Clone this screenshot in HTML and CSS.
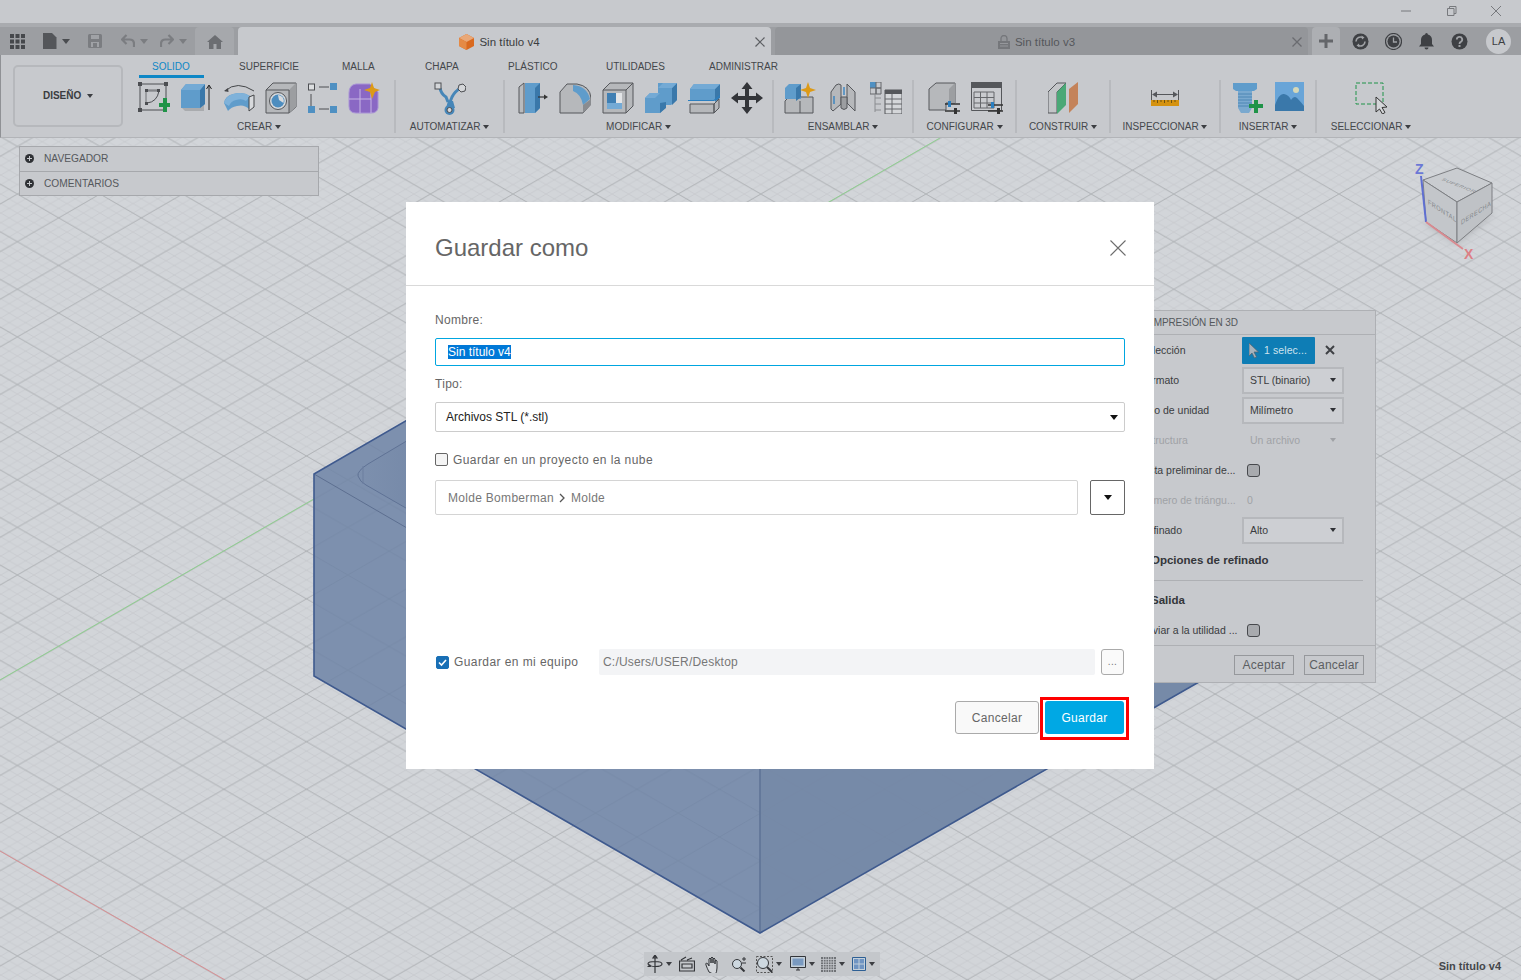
FILE: index.html
```html
<!DOCTYPE html>
<html lang="es">
<head>
<meta charset="utf-8">
<title>Sin título v4</title>
<link rel="stylesheet" href="styles.css">
</head>
<body>
<div class="app">
  <div class="titlebar">
    <svg class="win" width="14" height="14" viewBox="0 0 14 14"><path d="M2 7H12" stroke="#77797d" stroke-width="1"/></svg>
    <svg class="win" width="14" height="14" viewBox="0 0 14 14"><path d="M3.5 4.5h6.5v7H3.500zM5.500 4.500V2.500h6.500v7H10" fill="none" stroke="#77797d"/></svg>
    <svg class="win" width="14" height="14" viewBox="0 0 14 14"><path d="M2 2L12 12M12 2L2 12" stroke="#77797d"/></svg>
  </div>

  <div class="tabbar">
    <div class="qat">
      <svg class="q-grid" width="15" height="15" viewBox="0 0 15 15"><path d="M0 0h4v4H0zM5.500 0h4v4h-4zM11 0h4v4h-4zM0 5.500h4v4H0zM5.500 5.500h4v4h-4zM11 5.500h4v4h-4zM0 11h4v4H0zM5.500 11h4v4h-4zM11 11h4v4h-4z" fill="#46484c"/></svg>
      <svg class="q-file" width="14" height="16" viewBox="0 0 14 16"><path d="M0 0h9l4.500 4.500V16H0z" fill="#54565a"/></svg>
      <span class="caret q-caret1"></span>
      <svg class="q-save" width="14" height="14" viewBox="0 0 14 14"><path d="M0 1.500Q0 0 1.500 0h11Q14 0 14 1.500v11Q14 14 12.500 14h-11Q0 14 0 12.500z" fill="#7b7d81"/><path d="M3 1h8v4H3zM3 8h8v5H3z" fill="#a0a2a6"/><path d="M5 9h4v4H5z" fill="#7b7d81"/></svg>
      <svg class="q-undo" width="14" height="14" viewBox="0 0 14 14"><path d="M5.500 1L1 5.500l4.500 4.500M1.500 5.500H8.500Q13 5.500 13 10v3" fill="none" stroke="#7b7d81" stroke-width="2.200"/></svg>
      <span class="caret caret-dim q-caret2"></span>
      <svg class="q-redo" width="14" height="14" viewBox="0 0 14 14"><path d="M8.500 1L13 5.500l-4.500 4.500M12.500 5.500H5.500Q1 5.500 1 10v3" fill="none" stroke="#7b7d81" stroke-width="2.200"/></svg>
      <span class="caret caret-dim q-caret3"></span>
    </div>
    <div class="tab-home">
      <svg width="16" height="14" viewBox="0 0 16 14"><path d="M8 0L16 7h-2v7H9.500V9h-3v5H2V7H0z" fill="#6c6e72"/></svg>
    </div>
    <div class="tab tab-active">
      <svg class="tab-ico" width="15" height="16" viewBox="0 0 15 16"><path d="M7.500 0L15 4v8l-7.500 4L0 12V4z" fill="#d9691f"/><path d="M7.500 0L15 4 7.500 8 0 4z" fill="#e9a878"/><path d="M0 4l7.500 4v8L0 12z" fill="#e58a45"/></svg>
      <span class="tab-name">Sin título v4</span>
      <svg class="tab-x" width="10" height="10" viewBox="0 0 10 10"><path d="M.5.500l9 9M9.500.500l-9 9" stroke="#5d5f63" stroke-width="1.200"/></svg>
    </div>
    <div class="tab tab-other">
      <svg class="tab-ico" width="12" height="14" viewBox="0 0 12 14"><path d="M3 6V3.500a3 3 0 0 1 6 0V6" fill="none" stroke="#75777b" stroke-width="1.300"/><path d="M0 6h12v8H0z" fill="#75777b"/><path d="M2 8.500h8M2 11h8" stroke="#96989c"/></svg>
      <span class="tab-name">Sin título v3</span>
      <svg class="tab-x" width="10" height="10" viewBox="0 0 10 10"><path d="M.5.500l9 9M9.500.500l-9 9" stroke="#6a6c70" stroke-width="1.300"/></svg>
    </div>
    <div class="tab-plus">
      <svg width="14" height="14" viewBox="0 0 14 14"><path d="M5.500 0h3v5.500H14v3H8.500V14h-3V8.500H0v-3h5.500z" fill="#64666a"/></svg>
    </div>
    <div class="tray">
      <svg width="17" height="17" viewBox="0 0 17 17"><circle cx="8.500" cy="8.500" r="8" fill="#3e4044"/><path d="M4 8.500a4.500 4.500 0 0 1 7-3.700M13 8.500a4.500 4.500 0 0 1-7 3.700" fill="none" stroke="#a0a2a6" stroke-width="1.600"/><path d="M9.500 2.500l3 2-2.500 2zM7.500 14.500l-3-2 2.500-2z" fill="#a0a2a6"/></svg>
      <svg width="17" height="17" viewBox="0 0 17 17"><circle cx="8.500" cy="8.500" r="8" fill="none" stroke="#3e4044" stroke-width="1.200"/><circle cx="8.500" cy="8.500" r="6" fill="#3e4044"/><path d="M8.500 4.500v4.500h3.500" fill="none" stroke="#a0a2a6" stroke-width="1.300"/></svg>
      <svg width="15" height="17" viewBox="0 0 15 17"><path d="M7.500 0a1.500 1.500 0 0 1 1.400 1.500Q13 2.500 13 7v4l2 2.500H0L2 11V7q0-4.500 4.100-5.500A1.500 1.500 0 0 1 7.500 0z" fill="#3e4044"/><path d="M5.500 14.500h4a2 2 0 0 1-4 0z" fill="#3e4044"/></svg>
      <svg width="17" height="17" viewBox="0 0 17 17"><circle cx="8.500" cy="8.500" r="8" fill="#3e4044"/><path d="M5.800 6.500a2.700 2.700 0 1 1 4 2.400q-1.300.6-1.300 2" fill="none" stroke="#a0a2a6" stroke-width="1.800"/><rect x="7.500" y="12" width="2" height="2" fill="#a0a2a6"/></svg>
      <span class="avatar">LA</span>
    </div>
  </div>

  <div class="ribbon">
    <div class="design-wrap">
      <button class="design-btn">DISEÑO <span class="caret caret-small"></span></button>
    </div>
    <div class="ribbon-main">
      <div class="rtabs">
        <span class="rtab rtab-on">SOLIDO</span>
        <span class="rtab">SUPERFICIE</span>
        <span class="rtab">MALLA</span>
        <span class="rtab">CHAPA</span>
        <span class="rtab">PLÁSTICO</span>
        <span class="rtab">UTILIDADES</span>
        <span class="rtab">ADMINISTRAR</span>
      </div>
      <div class="rgroups">
        <div class="rgroup g-crear">
          <div class="ricons">
            <svg width="32" height="32" viewBox="0 0 32 32"><path d="M2 2h26v26H2z" fill="none" stroke="#4c4e52"/><path d="M0 0h4v4H0zM26 0h4v4h-4zM0 26h4v4H0z" fill="#4c4e52"/><path d="M8 8h12v1H8zM8 8v13" stroke="#6e7074" fill="none"/><path d="M9 21Q19 20 21 9" fill="none" stroke="#4c4e52"/><path d="M7 7h3v3H7zM19 7h3v3h-3zM7 20h3v3H7z" fill="#4c4e52"/><path d="M21 21h4v-5h4v5h4.500v4H29v5h-4v-5h-4z" fill="#1f9348"/></svg>
            <svg width="32" height="32" viewBox="0 0 32 32"><path d="M1 25l4 4h19l0-6H1z" fill="#a9abae"/><path d="M1 8L6 2h19v20l-5 4H1z" fill="#5f9ccb"/><path d="M20 8l5-6v20l-5 4z" fill="#3a78aa"/><path d="M1 8L6 2h19l-5 6z" fill="#74aad5"/><path d="M29 28V4M26.500 7L29 3l2.500 4" fill="none" stroke="#222"/></svg>
            <svg width="32" height="32" viewBox="0 0 32 32"><path d="M2 9Q14-2 31 9" fill="none" stroke="#444649"/><path d="M1 9l4-3 .5 4z" fill="#444649"/><path d="M1 21Q2 14 10 12q10-3 17 2l-1 13q-5-5-12-3-6 1-9 5z" fill="#5f9ccb"/><path d="M1 21Q3 14 10 12q10-3 17 2l-4 5q-4-3-10-1-5 1-7 6z" fill="#7fb2da"/><path d="M26 15l5-2v12l-5 4z" fill="#d8dadd" stroke="#444649"/></svg>
            <svg width="32" height="32" viewBox="0 0 32 32"><path d="M1 8l7-7h23v24l-7 6H1z" fill="#b6b8bb" stroke="#55575b"/><path d="M24 8l7-7v24l-7 6z" fill="#9c9ea1"/><path d="M1 8h23v23" fill="none" stroke="#55575b"/><circle cx="13" cy="19" r="8.500" fill="#d7dadd" stroke="#55575b"/><circle cx="13" cy="19" r="6.500" fill="#4d8dbf"/><path d="M13 13a6 6 0 0 1 5.500 8L14 18z" fill="#d7dadd"/></svg>
            <svg width="30" height="32" viewBox="0 0 30 32"><path d="M3 12V26M11 5H21M11 27H21" stroke="#4c4e52"/><rect x=".5" y="2" width="6" height="6" fill="#dcdee0" stroke="#4c4e52"/><rect x="0" y="24" width="7" height="7" fill="#4f90c2"/><rect x="22" y="1" width="7" height="7" fill="#4f90c2"/><rect x="22" y="24" width="7" height="7" fill="#4f90c2"/></svg>
            <svg width="32" height="32" viewBox="0 0 32 32"><path d="M1 11Q1 3 8 2h14l8 8v16q-1 5-7 5H8Q1 31 1 24z" fill="#8a68c4" stroke="#a892d6"/><path d="M1 17h22M12 7v24M23 10v21" stroke="#c7b6e4"/><path d="M24 0l2 6 6 2-5 2-3 7-2-7-6-2 6-2z" fill="#dd9a16"/></svg>
          </div>
          <span class="rlabel">CREAR <span class="caret caret-small"></span></span>
        </div>
        <div class="rgroup g-auto">
          <div class="ricons">
            <svg width="32" height="34" viewBox="0 0 32 34"><path d="M6 6q1 6 6 9l2 5M27 6q-6 3-9 9l-2 5" fill="none" stroke="#4686b8" stroke-width="3"/><path d="M14 19h5l2 7h-9z" fill="#4686b8"/><rect x="1" y="1" width="6" height="6" fill="#d4d6d9" stroke="#4c4e52"/><path d="M25 3l4-1 3 3-1 4-4 1-3-3z" fill="#d4d6d9" stroke="#4c4e52"/><circle cx="15.500" cy="28" r="5" fill="#4686b8"/><circle cx="15.500" cy="28" r="2.500" fill="#d4d6d9" stroke="#4c4e52"/></svg>
          </div>
          <span class="rlabel">AUTOMATIZAR <span class="caret caret-small"></span></span>
        </div>
        <div class="rgroup g-mod">
          <div class="ricons">
            <svg width="30" height="32" viewBox="0 0 30 32"><path d="M1 5l5-4v30H1z" fill="#b9bbbe" stroke="#55575b"/><path d="M7 1h15v25l-5 5H7z" fill="#5f9ccb"/><path d="M17 6l5-5v25l-5 5z" fill="#3a78aa"/><path d="M20 15h8" stroke="#333" stroke-width="1.200"/><path d="M26 12.500l4 2.500-4 2.500z" fill="#333"/></svg>
            <svg width="32" height="32" viewBox="0 0 32 32"><path d="M1 10l7-8h10q13 2 14 14v6l-8 9H1z" fill="#b6b8bb" stroke="#55575b"/><path d="M14 3q14 1 17 14l-7 6Q22 12 14 9z" fill="#5f9ccb"/><path d="M24 23l8-6v6l-8 8z" fill="#8a8c90"/></svg>
            <svg width="32" height="32" viewBox="0 0 32 32"><path d="M1 8l7-7h23v23l-7 7H1z" fill="#b6b8bb" stroke="#55575b"/><path d="M1 8h23v23M24 8l7-7" fill="none" stroke="#55575b"/><path d="M5 11h15v16H5z" fill="#e3e5e7"/><path d="M5 11h9v10H5z" fill="#3f7fb3"/><path d="M14 21h6v6H5v-6z" fill="#74aad5"/></svg>
            <svg width="32" height="32" viewBox="0 0 32 32"><path d="M0 16l5-5h8V1h19v17l-6 5h-6v3l-5 5H0z" fill="#5f9ccb"/><path d="M27 6l5-5v17l-5 5zM15 21l6-1v6l-6 5z" fill="#3a78aa"/><path d="M0 16l5-5h10l-5 5zM13 6l5-5h14l-5 5z" fill="#74aad5"/></svg>
            <svg width="32" height="32" viewBox="0 0 32 32"><path d="M2 7l4-5h26v16H2z" fill="#5f9ccb"/><path d="M27 7l5-5v14l-5 4z" fill="#3a78aa"/><path d="M2 7l4-5h26l-5 5z" fill="#74aad5"/><path d="M2 21h25l5-5v2l-5 5H2z" fill="#c6c8cc"/><path d="M0 18.500h26l6-5" fill="none" stroke="#2b7fc0" stroke-width="1.200"/><path d="M2 22h24v9H2zM26 22l5-5v9l-5 5z" fill="#b6b8bb" stroke="#55575b"/></svg>
            <svg width="32" height="32" viewBox="0 0 32 32"><path d="M16 0l5.500 7h-3.500v7h7v-3.500L32 16l-7 5.500V18h-7v7h3.500L16 32l-5.500-7h3.500v-7H7v3.500L0 16l7-5.500V14h7V7h-3.500z" fill="#333539"/></svg>
          </div>
          <span class="rlabel">MODIFICAR <span class="caret caret-small"></span></span>
        </div>
        <div class="rgroup g-ens">
          <div class="ricons">
            <svg width="32" height="32" viewBox="0 0 32 32"><path d="M1 19l4-4h24v16H1z" fill="#b6b8bb" stroke="#55575b"/><path d="M16 19v12" stroke="#55575b"/><path d="M1 6l4-4h12v15H1z" fill="#5f9ccb"/><path d="M12 6l5-4v13l-5 4z" fill="#3a78aa"/><path d="M24 0l2 6 6 2-6 2-2 6-2-6-6-2 6-2z" fill="#dd9a16"/></svg>
            <svg width="28" height="32" viewBox="0 0 28 32"><path d="M2 10l5-7q3-2 5 0v19l-8 7-2-2z" fill="#b6b8bb" stroke="#55575b"/><path d="M18 2l8 8v19l-8-8z" fill="#b6b8bb" stroke="#55575b"/><path d="M12 15h6v11q-3 3-6 0z" fill="#9c9ea1" stroke="#55575b"/><path d="M15 5v8M5 14v8" stroke="#2b7fc0" stroke-width="1.300"/></svg>
            <svg width="32" height="32" viewBox="0 0 32 32"><path d="M0 0h6v6H0z" fill="#4f90c2"/><path d="M6 0h5v6H6zM0 6h6v6H0zM6 6h5v6H6z" fill="none" stroke="#65676b"/><path d="M5 12v18M5 16h6M5 22h6M5 28h6" stroke="#8a8c90"/><path d="M15 8h17v24H15z" fill="#d4d6d9" stroke="#55575b"/><path d="M15 8h17v4H15z" fill="#55575b"/><path d="M15 17h17M15 22h17M15 27h17M22 12v20" stroke="#65676b"/></svg>
          </div>
          <span class="rlabel">ENSAMBLAR <span class="caret caret-small"></span></span>
        </div>
        <div class="rgroup g-conf">
          <div class="ricons">
            <svg width="32" height="32" viewBox="0 0 32 32"><path d="M1 7l7-6h19v20h-9v7H1z" fill="#b6b8bb" stroke="#55575b"/><path d="M21 7l6-6v20h-6z" fill="#9c9ea1"/><path d="M17 22h15M17 29h15" stroke="#333" stroke-width="1.500"/><path d="M20 19h3v6h-3z" fill="#2b7fc0"/><path d="M26 26h3v6h-3z" fill="#333"/></svg>
            <svg width="32" height="32" viewBox="0 0 32 32"><path d="M.5.500h30v28H.5z" fill="#c9cbcf" stroke="#55575b"/><path d="M0 0h31v6H0z" fill="#55575b"/><path d="M3 10h20v16H3z" fill="none" stroke="#65676b"/><path d="M3 15.500h20M3 21h20M9.500 10v16M16 10v16" stroke="#65676b"/><path d="M17 23h15M17 29h15" stroke="#333" stroke-width="1.500"/><path d="M20 20h3v6h-3z" fill="#2b7fc0"/><path d="M26 26h3v6h-3z" fill="#333"/></svg>
          </div>
          <span class="rlabel">CONFIGURAR <span class="caret caret-small"></span></span>
        </div>
        <div class="rgroup g-cons">
          <div class="ricons">
            <svg width="30" height="32" viewBox="0 0 30 32"><path d="M0 10l9-9h9v0l-9 9v21H0z" fill="#c3c5c8" stroke="#55575b"/><path d="M9 10l9-9v22l-9 9z" fill="#4aa876"/><path d="M21 7l9-7v22l-9 9z" fill="#c4835a"/></svg>
          </div>
          <span class="rlabel">CONSTRUIR <span class="caret caret-small"></span></span>
        </div>
        <div class="rgroup g-insp">
          <div class="ricons">
            <svg width="28" height="32" viewBox="0 0 28 32"><path d="M.5 8v10M27.500 8v10M2 12.500h24" stroke="#55575b"/><path d="M1 12.500l5-3v6zM27 12.500l-5-3v6z" fill="#55575b"/><path d="M0 18h28v6H0z" fill="#d5920f"/><path d="M3 18v2M6.500 18v3M10 18v2M13.500 18v3M17 18v2M20.500 18v3M24 18v2" stroke="#6d5010"/></svg>
          </div>
          <span class="rlabel">INSPECCIONAR <span class="caret caret-small"></span></span>
        </div>
        <div class="rgroup g-ins">
          <div class="ricons">
            <svg width="30" height="32" viewBox="0 0 30 32"><path d="M0 1h24v6l-3 2H3L0 7z" fill="#5f9ccb"/><path d="M5 9h14v17l-3 5H8l-3-5z" fill="#7aa9cf"/><path d="M5 12h14M5 15h14M5 18h14M5 21h14M5 24h14" stroke="#4d86b4"/><path d="M16 22h5v-4h4v4h5v4h-5v5h-4v-5h-5z" fill="#1f9348"/></svg>
            <svg width="29" height="30" viewBox="0 0 29 30"><path d="M0 0h29v29H0z" fill="#69a5d8"/><circle cx="21" cy="8" r="3" fill="#d6d8b8"/><path d="M0 23q4-12 9-11t7 6q3-5 6-2t7 8v5H0z" fill="#3a78aa"/></svg>
          </div>
          <span class="rlabel">INSERTAR <span class="caret caret-small"></span></span>
        </div>
        <div class="rgroup g-sel">
          <div class="ricons">
            <svg width="33" height="32" viewBox="0 0 33 32"><path d="M1 1h27v21H1z" fill="none" stroke="#1f9348" stroke-dasharray="4 2"/><path d="M21 15v15l3.500-3 3 5 2.500-1.500-3-5 5-.5z" fill="#d4d6d9" stroke="#333"/></svg>
          </div>
          <span class="rlabel">SELECCIONAR <span class="caret caret-small"></span></span>
        </div>
      </div>
    </div>
  </div>

  <div class="stage">
    <svg class="canvas" viewBox="0 138 1521 842" preserveAspectRatio="none">
      <defs>
        <pattern id="minor" width="16.520" height="9.524" patternUnits="userSpaceOnUse" patternTransform="translate(17.400 3.570)">
          <path d="M0 0L16.520 9.524M0 9.524L16.520 0" stroke="#c6c9cd" stroke-width=".8"/>
        </pattern>
        <pattern id="major" width="82.600" height="47.620" patternUnits="userSpaceOnUse" patternTransform="translate(17.400 3.570)">
          <path d="M0 0L82.600 47.620M0 47.620L82.600 0" stroke="#aeb1b5" stroke-width=".9"/>
        </pattern>
        <pattern id="ghost" width="82.600" height="47.620" patternUnits="userSpaceOnUse" patternTransform="translate(17.400 3.570)">
          <path d="M0 0L82.600 47.620M0 47.620L82.600 0" stroke="#7588a6" stroke-width=".8"/>
        </pattern>
        <linearGradient id="pocket" x1="0" y1="0" x2="1" y2="0">
          <stop offset="0" stop-color="#7d90ae"/>
          <stop offset=".5" stop-color="#6e82a2"/>
        </linearGradient>
        <filter id="soft"><feGaussianBlur stdDeviation="5"/></filter>
      </defs>
      <rect x="0" y="138" width="1521" height="842" fill="#d2d5d9"/>
      <rect x="0" y="138" width="1521" height="842" fill="url(#minor)"/>
      <rect x="0" y="138" width="1521" height="842" fill="url(#major)"/>
      <path d="M0 680L940 138" stroke="#8fd08f" stroke-width="1"/>
      <path d="M0 851L225 980" stroke="#d98f93" stroke-width="1"/>
      <path d="M314 474L760 216L1206 474L1206 678L760 933L314 676z" fill="#7d90ae"/>
      <path d="M760 733L1206 474V678L760 933z" fill="#768aa8"/>
      <path d="M314 474L760 216L1206 474L1206 678L760 933L314 676z" fill="url(#ghost)"/>
      <path d="M420 433L368 464Q357 471 358 476Q360 482 366 485L470 545L600 460z" fill="url(#pocket)" stroke="#5f7295" stroke-width="1"/>
      <path d="M363 466V484" stroke="#6c7f9f"/>
      <path d="M314 474L760 733" fill="none" stroke="#5d6f90" stroke-width="1"/>
      <path d="M760 733L1206 474" fill="none" stroke="#5d6f90" stroke-width="1"/>
      <path d="M760 733V933" fill="none" stroke="#5f7497" stroke-width="1.600"/>
      <path d="M760 216L314 474V676L760 933L1206 678" fill="none" stroke="#3f5a8e" stroke-width="1.600"/>
      <g filter="url(#soft)"><path d="M1426 222L1457 243L1492 213L1480 205L1440 215z" fill="#a7aaae"/></g>
      <path d="M1423 180L1457 168L1492 183L1457 202z" fill="#c9ccd0" stroke="#7d7f83"/>
      <path d="M1423 180L1457 202V243L1426 222z" fill="#c3c6ca" stroke="#7d7f83"/>
      <path d="M1457 202L1492 183V213L1457 243z" fill="#bfc2c6" stroke="#7d7f83"/>
      <text class="cube-t" transform="matrix(.82 .32 -.55 .4 1441 180)">SUPERIOR</text>
      <text class="cube-t" transform="matrix(.8 .52 0 1 1428 204)">FRONTAL</text>
      <text class="cube-t" transform="matrix(.8 -.52 0 1 1461 225)">DERECHA</text>
      <path d="M1426 222L1421 176" stroke="#5f6fd2" stroke-width="2"/>
      <path d="M1426 222L1463 249" stroke="#d98a90" stroke-width="2"/>
      <text class="axis axis-z" x="1415" y="174">Z</text>
      <text class="axis axis-x" x="1464" y="259">X</text>
    </svg>

    <div class="browser">
      <div class="br-row"><span class="br-plus"></span>NAVEGADOR</div>
      <div class="br-row"><span class="br-plus"></span>COMENTARIOS</div>
    </div>

    <div class="palette">
      <div class="pal-head">IMPRESIÓN EN 3D</div>
      <div class="pal-body">
        <div class="pal-row"><span class="pal-label">Selección</span>
          <span class="pal-sel"><svg width="10" height="15" viewBox="0 0 10 15"><path d="M0 0v13l3-3 2.500 5 2-1-2.500-5h4.500z" fill="#a6b3bd" stroke="#54606a" stroke-width=".7"/></svg>1 selec...</span>
          <svg class="pal-x" width="10" height="10" viewBox="0 0 10 10"><path d="M1 1l8 8M9 1l-8 8" stroke="#3f4145" stroke-width="2"/></svg>
        </div>
        <div class="pal-row"><span class="pal-label">Formato</span><span class="pal-drop">STL (binario)<span class="caret caret-pal"></span></span></div>
        <div class="pal-row"><span class="pal-label">Tipo de unidad</span><span class="pal-drop">Milímetro<span class="caret caret-pal"></span></span></div>
        <div class="pal-row pal-off"><span class="pal-label">Estructura</span><span class="pal-drop pal-drop-off">Un archivo<span class="caret caret-pal caret-off"></span></span></div>
        <div class="pal-row"><span class="pal-label">Vista preliminar de...</span><span class="pal-check"></span></div>
        <div class="pal-row pal-off"><span class="pal-label">Número de triángu...</span><span class="pal-val">0</span></div>
        <div class="pal-row"><span class="pal-label">Refinado</span><span class="pal-drop">Alto<span class="caret caret-pal"></span></span></div>
        <div class="pal-row pal-sect">Opciones de refinado</div>
        <div class="pal-rule"></div>
        <div class="pal-row pal-sect">Salida</div>
        <div class="pal-row"><span class="pal-label">Enviar a la utilidad ...</span><span class="pal-check"></span></div>
      </div>
      <div class="pal-foot"><span class="pal-btn pal-ok">Aceptar</span><span class="pal-btn pal-no">Cancelar</span></div>
    </div>

    <div class="viewbar">
      <div class="vb"><svg width="16" height="18" viewBox="0 0 16 18"><path d="M8 0v18M8 0l-2 3h4zM1 9q0-2.500 7-2.500T15 9q0 2.500-7 2.500Q3 11.500 1 9z" fill="none" stroke="#333539" stroke-width="1.200"/><path d="M3 9l-3 3h4z" fill="#333539"/></svg><span class="caret caret-small"></span></div>
      <div class="vb"><svg width="16" height="16" viewBox="0 0 16 16"><path d="M.5 5h15v10H.5zM3 8h10v4H3zM2 4l5-3M8 4l5-2" fill="none" stroke="#333539" stroke-width="1.200"/></svg></div>
      <div class="vb"><svg width="16" height="17" viewBox="0 0 16 17"><path d="M4 16Q2 12 1 9t2-1l1 2V3q1-2 2 0v4-5q1-2 2 0v5-4q1-2 2 0v5-3q1-1.500 2 0v7q0 4-2 7z" fill="#d2d5d9" stroke="#333539"/></svg></div>
      <div class="vb"><svg width="16" height="16" viewBox="0 0 16 16"><circle cx="6" cy="8" r="4.500" fill="#cdd8e0" stroke="#333539"/><path d="M9.500 11.500l4 4" stroke="#333539" stroke-width="2"/><path d="M11 3h4M13 1v4M11 7h4" stroke="#333539"/></svg></div>
      <div class="vb"><svg width="17" height="17" viewBox="0 0 17 17"><path d="M.5.500h16v16H.5z" fill="none" stroke="#555" stroke-dasharray="2 1.500"/><circle cx="7" cy="7" r="5.500" fill="#cdd8e0" stroke="#333539"/><path d="M11 11l5 5" stroke="#333539" stroke-width="2"/></svg><span class="caret caret-small"></span></div>
      <div class="vb"><svg width="16" height="16" viewBox="0 0 16 16"><path d="M.5.500h15v11H.5z" fill="#c4d0da" stroke="#333539"/><path d="M2.500 2.500h11v7h-11z" fill="#7a9ac0"/><path d="M6 14h4M8 12v2" stroke="#333539"/></svg><span class="caret caret-small"></span></div>
      <div class="vb"><svg width="15" height="15" viewBox="0 0 15 15"><path d="M0 0h15v15H0z" fill="#6f7276"/><path d="M2.500 0v15M5 0v15M7.500 0v15M10 0v15M12.500 0v15M0 2.500h15M0 5h15M0 7.500h15M0 10h15M0 12.500h15" stroke="#c4c7cb" stroke-width=".8"/></svg><span class="caret caret-small"></span></div>
      <div class="vb"><svg width="14" height="14" viewBox="0 0 14 14"><path d="M.5.500h13v13H.5z" fill="#c4d0da" stroke="#2d5f94"/><path d="M2 2h4.500v4.500H2zM7.500 2H12v4.500H7.500zM2 7.500h4.500V12H2zM7.500 7.500H12V12H7.500z" fill="#6f94c2"/></svg><span class="caret caret-small"></span></div>
    </div>
    <div class="docname">Sin título v4</div>
  </div>

  <div class="dialog">
    <div class="dlg-head">
      <h1 class="dlg-title">Guardar como</h1>
      <svg width="16" height="16" viewBox="0 0 16 16"><path d="M.5.500l15 15M15.500.500l-15 15" stroke="#6d6d6d" stroke-width="1.100"/></svg>
    </div>
    <div class="dlg-body">
      <label class="fld-label l-name">Nombre:</label>
      <div class="input"><span class="selected">Sin título v4</span></div>
      <label class="fld-label l-type">Tipo:</label>
      <div class="select">Archivos STL (*.stl)<span class="caret caret-black"></span></div>
      <div class="check-row r-cloud"><span class="box"></span><span class="check-text">Guardar en un proyecto en la nube</span></div>
      <div class="crumb-row">
        <div class="crumb">Molde Bomberman<svg width="7" height="10" viewBox="0 0 7 10"><path d="M1 1l4 4-4 4" fill="none" stroke="#555" stroke-width="1.300"/></svg>Molde</div>
        <div class="crumb-btn"><span class="caret caret-black"></span></div>
      </div>
      <div class="local-row">
        <div class="local-check"><span class="box box-on"><svg width="11" height="11" viewBox="0 0 11 11"><path d="M2 5.500l2.500 2.500L9 3" fill="none" stroke="#fff" stroke-width="1.600"/></svg></span><span class="check-text">Guardar en mi equipo</span></div>
        <div class="path">C:/Users/USER/Desktop</div>
        <div class="path-btn">...</div>
      </div>
      <div class="actions">
        <button class="btn btn-cancel">Cancelar</button>
        <button class="btn btn-save">Guardar</button>
      </div>
    </div>
  </div>
</div>
</body>
</html>
```

FILE: styles.css
```css
* { box-sizing: border-box; }
html, body { margin: 0; padding: 0; }
body { font-family: "Liberation Sans", Arial, sans-serif; background: #c6c8cc; }
.app { position: relative; width: 1521px; height: 980px; overflow: hidden; display: flex; flex-direction: column; }

.caret { display: inline-block; width: 0; height: 0; border-left: 4px solid transparent; border-right: 4px solid transparent; border-top: 5px solid #4a4c50; }
.caret-dim { border-top-color: #7b7d81; }
.caret-small { border-left-width: 3px; border-right-width: 3px; border-top-width: 4px; border-top-color: #3c3e42; vertical-align: middle; margin-left: 0; }

.titlebar { height: 23px; flex: none; background: #c7c9cd; display: flex; justify-content: flex-end; align-items: center; gap: 31px; padding: 0 18px 2px 0; }

.tabbar { height: 32px; flex: none; background: #9c9ea2; border-top: 4px solid #a9abaf; display: flex; align-items: stretch; position: relative; }
.qat { width: 195px; display: flex; align-items: center; flex: none; }
.q-grid { margin-left: 10px; }
.q-file { margin-left: 18px; }
.q-caret1 { margin-left: 5px; }
.q-save { margin-left: 18px; }
.q-undo { margin-left: 19px; }
.q-caret2 { margin-left: 5px; }
.q-redo { margin-left: 12px; }
.q-caret3 { margin-left: 5px; }
.tab-home { width: 39px; flex: none; background: #a6a8ac; border-radius: 4px 4px 0 0; display: flex; align-items: center; justify-content: center; margin-right: 4px; padding-top: 2px; }
.tab { width: 533px; flex: none; border-radius: 4px 4px 0 0; display: flex; align-items: center; justify-content: center; position: relative; font-size: 11.5px; padding: 2px 10px 0 0; }
.tab-active { background: #c7c9cd; color: #3a3c40; margin-right: 4px; }
.tab-other { background: #94969a; color: #55575b; margin-right: 4px; }
.tab-ico { margin-right: 5px; }
.tab-x { position: absolute; right: 6px; top: 10px; }
.tab-plus { width: 28px; flex: none; background: #adafb3; border-radius: 4px 4px 0 0; display: flex; align-items: center; justify-content: center; }
.tray { flex: 1; display: flex; align-items: center; padding-left: 12px; gap: 16px; }
.tray svg:nth-child(3) { margin: 0 1px; }
.avatar { width: 25px; height: 25px; border-radius: 50%; background: #c7c9cd; color: #3c3e42; font-size: 11px; display: flex; align-items: center; justify-content: center; margin-left: 2px; }

.ribbon { height: 83px; flex: none; background: #c7c9cd; border-bottom: 1px solid #b2b4b8; border-left: 1px solid #8f9195; display: flex; }
.design-wrap { width: 130px; flex: none; padding: 10px 0 0 12px; }
.design-btn { width: 110px; height: 62px; border: 2px solid #b6b8bc; border-radius: 5px; background: #c7c9cd; font: bold 10px "Liberation Sans", Arial, sans-serif; color: #3a3c40; padding: 0 0 2px; }
.design-btn .caret { margin-left: 3px; }
.ribbon-main { flex: 1; display: flex; flex-direction: column; }
.rtabs { display: grid; grid-template-columns: 87px 103px 83px 83px 98px 103px 1fr; height: 23px; padding-left: 8px; align-items: end; flex: none; }
.rtab { font-size: 10px; color: #44474b; padding: 0 13px; height: 23px; line-height: 24px; border-bottom: 3px solid transparent; white-space: nowrap; }
.rtab-on { color: #0e87c6; border-bottom-color: #0e87c6; width: 65px; }
.rgroups { display: flex; height: 55px; margin-top: 2px; }
.rgroup { display: flex; flex-direction: column; align-items: center; border-right: 2px solid #b8babe; flex: none; height: 53px; }
.ricons { display: flex; align-items: flex-start; height: 40px; padding-top: 2px; flex: none; }
.rlabel { font-size: 10px; color: #44474b; white-space: nowrap; line-height: 14px; margin-top: 0; }
.g-crear { width: 265px; padding-right: 7px; }
.g-crear .ricons { gap: 10.600px; }
.g-auto { width: 109px; }
.g-mod { width: 269px; }
.g-mod .ricons { gap: 11px; margin-left: 4px; }
.g-ens { width: 140px; }
.g-ens .ricons { gap: 13px; }
.g-conf { width: 103px; }
.g-conf .ricons { gap: 11px; margin-left: 1px; }
.g-cons { width: 94px; }
.g-insp { width: 110px; }
.g-ins { width: 96px; }
.g-ins .ricons { gap: 12px; }
.g-sel { width: 108px; border-right: 0; }

.stage { flex: 1; position: relative; overflow: hidden; }
.canvas { position: absolute; inset: 0; width: 100%; height: 100%; display: block; }
.cube-t { font: 7px "Liberation Sans", Arial, sans-serif; fill: #85888c; letter-spacing: .5px; }
.axis { font: bold 14px "Liberation Sans", Arial, sans-serif; }
.axis-z { fill: #6b78d6; }
.axis-x { fill: #dc7f85; }

.browser { position: absolute; left: 19px; top: 8px; width: 300px; background: #c7c9cd; border: 1px solid #a6a8ac; }
.br-row { height: 24px; display: flex; align-items: center; font-size: 10.200px; color: #55585c; padding-left: 5px; }
.br-row:first-child { padding-bottom: 2px; }
.br-row + .br-row { border-top: 1px solid #a6a8ac; }
.br-plus { width: 9px; height: 9px; border-radius: 50%; background: #2f3135; margin-right: 10px; position: relative; }
.br-plus::before, .br-plus::after { content: ""; position: absolute; background: #c7c9cd; }
.br-plus::before { left: 2px; right: 2px; top: 4px; height: 1px; }
.br-plus::after { top: 2px; bottom: 2px; left: 4px; width: 1px; }

.palette { position: absolute; left: 1126px; top: 172px; width: 250px; height: 373px; background: #c7c9cd; border: 1px solid #aeb0b4; display: flex; flex-direction: column; font-size: 10.500px; color: #3a3c40; }
.pal-head { height: 24px; flex: none; border-bottom: 1px solid #aeb0b4; padding-left: 24px; line-height: 23px; color: #55585c; font-size: 10px; letter-spacing: -.1px; }
.pal-body { flex: 1; padding: 0 12px 0 13px; }
.pal-row { height: 30px; display: flex; align-items: center; position: relative; }
.pal-label { width: 102px; flex: none; white-space: nowrap; }
.pal-off { color: #a0a2a6; }
.pal-sel { width: 73px; height: 27px; background: #0e7db5; color: #cfe3ee; display: flex; align-items: center; padding-left: 7px; gap: 5px; border-radius: 1px; letter-spacing: .1px; }
.pal-x { margin-left: 10px; }
.pal-drop { width: 102px; height: 27px; border: 2px solid #b6b8bc; background: #cdcfd3; display: flex; align-items: center; padding-left: 6px; position: relative; }
.pal-drop-off { border-color: transparent; background: none; }
.caret-pal { position: absolute; right: 6px; top: 9px; border-left-width: 3px; border-right-width: 3px; border-top-width: 4px; border-top-color: #2f3135; }
.caret-off { border-top-color: #a0a2a6; }
.pal-check { width: 13px; height: 13px; margin-left: 5px; border: 1px solid #47494d; border-radius: 3px; background: #a8aaae; }
.pal-val { margin-left: 5px; }
.pal-sect { font-weight: bold; font-size: 11.500px; padding-left: 11px; color: #34363a; }
.pal-rule { height: 1px; background: #aeb0b4; margin: 5px 0 4px 8px; }
.pal-foot { height: 37px; flex: none; border-top: 1px solid #aeb0b4; position: relative; display: flex; justify-content: flex-end; gap: 10px; padding: 9px 11px 0 0; }
.pal-btn { height: 20px; border: 1px solid #96989c; font-size: 12px; letter-spacing: .2px; color: #5c5e62; display: flex; align-items: center; justify-content: center; background: #c7c9cd; }
.pal-ok { width: 60px; }
.pal-no { width: 60px; }

.viewbar { position: absolute; left: 644px; top: 814px; width: 236px; height: 24px; background: #c4c7cb; display: grid; grid-template-columns: 32px 26px 26px 25px 34px 31px 31px 1fr; padding-left: 3px; align-items: center; }
.vb { display: flex; align-items: center; gap: 3px; }
.docname { position: absolute; right: 20px; top: 822px; font-size: 11px; font-weight: bold; color: #45474b; }

.dialog { position: absolute; left: 406px; top: 202px; width: 748px; height: 567px; background: #fff; display: flex; flex-direction: column; }
.dlg-head { height: 84px; flex: none; border-bottom: 1px solid #d9d9d9; display: flex; align-items: center; justify-content: space-between; padding: 9px 28px 0 29px; }
.dlg-title { font-size: 24px; font-weight: normal; color: #666; margin: 0; letter-spacing: 0; }
.dlg-body { flex: 1; padding: 0 29px; display: flex; flex-direction: column; font-size: 12px; color: #666; letter-spacing: .42px; }
.fld-label { display: block; line-height: 14px; letter-spacing: .3px; }
.l-name { margin-top: 27px; }
.input { height: 28px; margin-top: 11px; border: 1px solid #00a6e0; border-radius: 2px; padding-left: 12px; display: flex; align-items: center; font-size: 12px; letter-spacing: 0; }
.selected { background: #0078d7; color: #fff; line-height: 14px; }
.l-type { margin-top: 11px; }
.select { height: 30px; margin-top: 11px; border: 1px solid #ccc; border-radius: 2px; padding-left: 10px; display: flex; align-items: center; color: #222; letter-spacing: 0; position: relative; }
.caret-black { border-top-color: #111; }
.select .caret { position: absolute; right: 6px; top: 12px; }
.check-row { display: flex; align-items: center; margin-top: 20px; height: 14px; }
.r-cloud .check-text { margin-top: 2px; }
.box { width: 13px; height: 13px; border: 1px solid #666; border-radius: 2px; background: #f4f4f4; flex: none; display: flex; align-items: center; justify-content: center; }
.box-on { background: #186fb5; border-color: #186fb5; }
.check-text { margin-left: 5px; white-space: nowrap; }
.crumb-row { display: flex; justify-content: space-between; margin-top: 14px; height: 35px; }
.crumb { width: 643px; border: 1px solid #d4d4d4; border-radius: 2px; padding-left: 12px; display: flex; align-items: center; gap: 5px; color: #777; letter-spacing: .3px; }
.crumb-btn { width: 35px; border: 1px solid #666; border-radius: 2px; display: flex; align-items: center; justify-content: center; }
.local-row { display: flex; align-items: center; margin-top: 134px; height: 26px; }
.local-check { display: flex; align-items: center; width: 164px; padding-left: 1px; }
.path { width: 496px; height: 26px; background: #f3f4f6; border-radius: 2px; padding-left: 4px; display: flex; align-items: center; color: #777; letter-spacing: .2px; }
.path-btn { width: 23px; height: 26px; margin-left: 6px; border: 1px solid #aaa; border-radius: 3px; background: #fafafa; text-align: center; line-height: 24px; font-size: 10px; color: #777; }
.actions { display: flex; justify-content: flex-end; gap: 6px; margin-top: 26px; padding-right: 1px; }
.btn { height: 33px; border-radius: 3px; font: 12px "Liberation Sans", Arial, sans-serif; letter-spacing: .3px; padding: 0; position: relative; }
.btn-cancel { width: 84px; background: #f9f9f9; border: 1px solid #aaa; color: #666; }
.btn-save { width: 79px; background: #00a8e4; border: 0; color: #fff; }
.btn-save::after { content: ""; position: absolute; left: -5px; right: -5px; top: -4px; bottom: -6px; border: 3px solid #f00; }
```
